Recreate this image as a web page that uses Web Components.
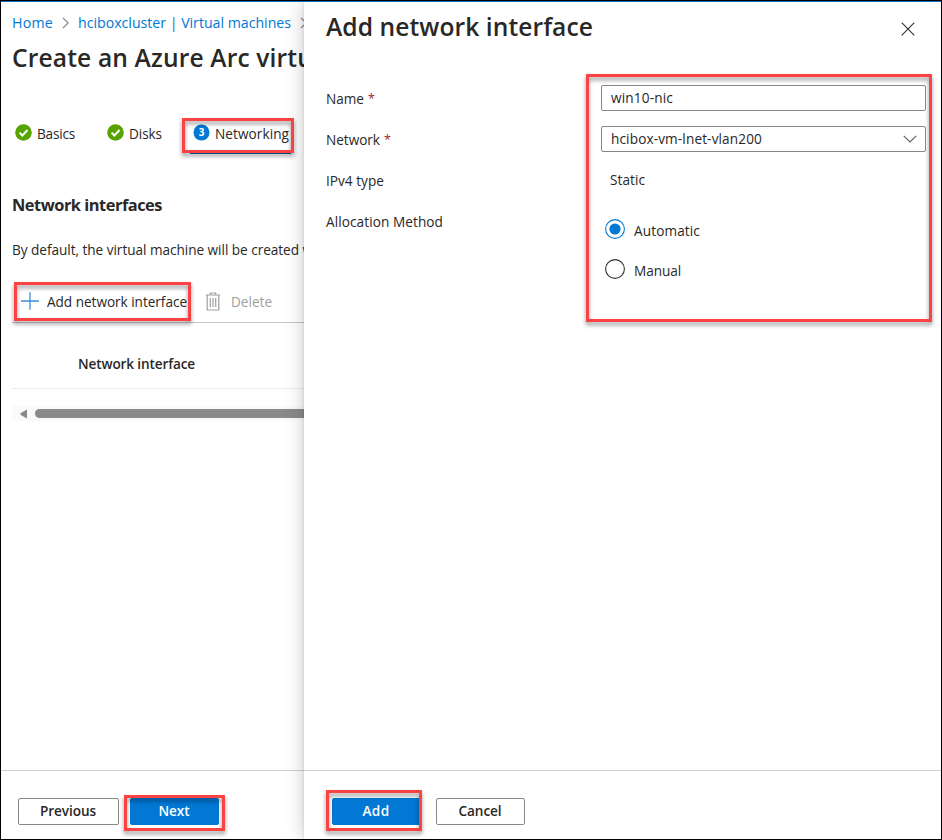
<!DOCTYPE html>
<html lang="en"><head><meta charset="utf-8"><title>Add network interface</title>
<style>
html,body{margin:0;height:100%;overflow:hidden}
body{font-family:"Open Sans","Noto Sans",sans-serif;font-size:13.6px;color:#292827;background:#fff}
</style></head><body>
<portal-frame>
  <wizard-pane slot="wizard"></wizard-pane>
  <nic-panel slot="panel"></nic-panel>
</portal-frame>
<script>
function define(name, html, after) {
  const t = document.createElement('template');
  t.innerHTML = html;
  customElements.define(name, class extends HTMLElement {
    connectedCallback() {
      if (this.shadowRoot) return;
      this.attachShadow({mode: 'open'}).appendChild(t.content.cloneNode(true));
      if (after) after(this, this.shadowRoot);
    }
  });
}

/* Single-line text whose tracking is adjusted to a given width (w). */
define('fit-text', `<style>:host{display:inline-block;white-space:nowrap;line-height:30px;flex:none}</style><slot></slot>`, el => {
  const w = +el.getAttribute('w');
  if (!w) return;
  const n = el.textContent.length;
  const nat = el.getBoundingClientRect().width;
  el.style.letterSpacing = ((w - nat) / n).toFixed(3) + 'px';
});

/* Red callout drawn over its slotted content; --o is the inset. */
define('call-out', `<style>
:host{display:block;position:relative}
i{position:absolute;inset:var(--o,0);border:3px solid #fc4343;filter:drop-shadow(0 3px 2px rgba(0,0,0,.42));pointer-events:none;z-index:2}
</style><slot></slot><i></i>`);

define('crumb-chevron', `<style>:host{display:block;width:8px;height:12px;flex:none}svg{display:block}</style>
<svg width="8" height="12" viewBox="0 0 8 12" fill="none" stroke="#8a8886" stroke-width="1.1"><path d="M1 1l5.2 5L1 11"/></svg>`);

define('step-tab', `<style>
:host{display:flex;align-items:center;height:30px}
svg{display:block;margin:-4px 5px 0 0;flex:none}
text{font:bold 10px "Open Sans",sans-serif;fill:#fff}
</style><svg width="17" height="17" viewBox="0 0 17 17"></svg><slot></slot>`, (el, r) => {
  const n = el.getAttribute('number');
  r.querySelector('svg').innerHTML = n
    ? `<circle cx="8.5" cy="8.5" r="8" fill="#0078d4"/><text x="8.5" y="11.8" text-anchor="middle">${n}</text>`
    : '<circle cx="8.5" cy="8.5" r="8.3" fill="#57a300"/><path d="M4.6 8.6l2.8 2.9 5.1-5.5" fill="none" stroke="#fff" stroke-width="2"/>';
});

define('ui-button', `<style>
:host{display:flex;box-sizing:border-box;height:27px;align-items:center;justify-content:center;border:1px solid #8a8886;border-radius:2px;font-weight:600;background:#fff}
:host([primary]){background:#0078d4;border-color:#0078d4;color:#fff}
::slotted(*){margin:-2px 1px 0 0}
</style><slot></slot>`);

define('text-field', `<style>
:host{display:flex;box-sizing:border-box;width:325px;height:26px;border:1px solid #8a8886;border-radius:2px;align-items:center;padding:0 8px 0 9px;justify-content:space-between}
svg{display:none}:host([dropdown]) svg{display:block}
</style><slot></slot><svg width="14" height="8" viewBox="0 0 14 8" fill="none" stroke="#605e5c" stroke-width="1.1"><path d="M.7 .8L7 7l6.3-6.2"/></svg>`);

define('radio-option', `<style>
:host{display:flex;align-items:center;height:40px}
svg{display:block;margin:-4px 9px 0 0}
</style><svg width="20" height="20" viewBox="0 0 20 20" fill="none"><circle cx="10" cy="10" r="9.4" stroke="#323130" stroke-width="1.1"/></svg><slot></slot>`, (el, r) => {
  if (el.hasAttribute('checked'))
    r.querySelector('svg').innerHTML = '<circle cx="10" cy="10" r="9.4" stroke="#0078d4" stroke-width="1.1"/><circle cx="10" cy="10" r="5.6" fill="#0078d4"/>';
});

define('form-label', `<style>:host{display:flex;align-items:center;height:41px;gap:4px}b{color:#a4262c;font-weight:400;font-size:12.5px;line-height:30px}</style><slot></slot>`, (el, r) => {
  if (el.hasAttribute('required')) {
    const b = document.createElement('b'); b.textContent = '*'; r.appendChild(b);
  }
});

define('wizard-pane', `<style>
:host{display:flex;flex-direction:column;height:100%;overflow:hidden}
main{flex:1;padding:6px 0 0 11px;display:flex;flex-direction:column;min-height:0}
nav{display:flex;align-items:center;color:#0078d4;font-size:14.2px;height:30px}
nav crumb-chevron{margin:0 8px 0 9px}
h1{margin:5px 0 0;font-size:24.6px;font-weight:600;height:30px;line-height:30px}
.steps{display:flex;margin:46px 0 0 3px;height:30px}
.steps call-out{margin-left:31px;--o:-1px -3px -4px -11px}
.line{height:1px;background:#005a9e;margin:4px 0 0 -3px;width:101px}
h2{margin:41px 0 0;font-size:16.4px;font-weight:700;height:30px;line-height:30px}
p{margin:15px 0 0;height:30px;white-space:nowrap}
.bar{display:flex;align-items:flex-start;height:35px;margin-top:22px;border-bottom:1px solid #c8c6c4}
.bar call-out{--o:-5px -4px -4px -6px;margin-left:8px}
.cmd{display:flex;align-items:center;height:30px}
.cmd svg{display:block;margin:-2px 7px 0 0}
.del{color:#a19f9d;margin-left:18px}.del svg{margin-right:10px}
.head{height:65px;border-bottom:1px solid #edebe9;display:flex;align-items:center;padding:0 0 0 66px;font-weight:600;box-sizing:border-box;margin-top:1px;padding-top:15px}
.scroll{height:15px;background:#fafafa;margin-top:17px;display:flex;align-items:center;padding-left:8px}
.scroll i{flex:1;height:9px;background:#8a8a8a;border-radius:5px 0 0 5px;margin-left:8px}
.scroll svg{display:block}
footer{height:69px;border-top:1px solid #d0d0d0;display:flex;align-items:flex-start;padding:27px 0 0 17px;box-sizing:border-box;gap:11px}
footer>ui-button{width:101px}footer call-out{width:89px;--o:-3px -6px -6px -6px}
</style>
<main>
<nav><fit-text w="41">Home</fit-text><crumb-chevron></crumb-chevron><fit-text w="213">hciboxcluster | Virtual machines</fit-text><crumb-chevron></crumb-chevron></nav>
<h1><fit-text w="301">Create an Azure Arc virtu</fit-text></h1>
<div class="steps"><step-tab><fit-text w="38">Basics</fit-text></step-tab><step-tab style="margin-left:32px"><fit-text w="33">Disks</fit-text></step-tab>
<call-out><step-tab number="3"><fit-text w="74">Networking</fit-text></step-tab><div class="line"></div></call-out></div>
<h2><fit-text w="150">Network interfaces</fit-text></h2>
<p><fit-text w="287">By default, the virtual machine will be created</fit-text><fit-text>&nbsp;w</fit-text></p>
<div class="bar"><call-out><div class="cmd"><svg width="20" height="18" viewBox="0 0 20 18" fill="none" stroke="#3b8ede" stroke-width="1.3"><path d="M1 9h18M10 .3v17.4"/></svg><fit-text w="140">Add network interface</fit-text></div></call-out>
<div class="cmd del"><svg width="16" height="19" viewBox="0 0 16 19" fill="none" stroke="#a19f9d" stroke-width="1.2"><path d="M.8 3h14.4M5.3 3V1h5.4v2M2.2 3v15h11.6V3M5.3 6v9M8 6v9M10.7 6v9"/></svg><fit-text w="41">Delete</fit-text></div></div>
<div class="head"><fit-text w="117">Network interface</fit-text></div>
<div class="scroll"><svg width="7" height="10" viewBox="0 0 7 10"><path d="M7 .5v9L.8 6Q-.2 5 .8 4z" fill="#8a8a8a"/></svg><i></i></div>
</main>
<footer><ui-button><fit-text w="56">Previous</fit-text></ui-button><call-out><ui-button primary><fit-text w="31">Next</fit-text></ui-button></call-out></footer>`);

define('nic-panel', `<style>
:host{display:flex;flex-direction:column;height:100%;background:#fff;position:relative;box-shadow:0 0 18px rgba(0,0,0,.22),0 0 3px rgba(0,0,0,.12)}
header{display:flex;justify-content:space-between;align-items:center;padding:10px 26px 0 22px;height:30px}
h1{margin:0;font-size:24.6px;font-weight:600;line-height:30px;height:30px}
header svg{display:block;margin-top:3px}
main{flex:1;display:grid;grid-template-columns:275px 325px;padding:36px 0 0 22px;align-content:start}
call-out{--o:-6px -6px 0 -15px;height:242px}
main call-out{margin-top:2px}
.fields{padding-top:5px;height:237px;box-sizing:border-box}
text-field{margin-bottom:15px}
.static{height:26px;display:flex;align-items:center;padding-left:9px}
radio-option{margin-left:4px}
footer{height:69px;border-top:1px solid #d0d0d0;display:flex;align-items:flex-start;padding:27px 0 0 27px;box-sizing:border-box;gap:14px}
footer call-out{width:91px;height:27px;--o:-8px 0 -6px -5px}
footer call-out ui-button{width:89px;margin-left:1px}
footer>ui-button{width:89px}
</style>
<header><h1><fit-text w="267">Add network interface</fit-text></h1><svg width="14" height="14" viewBox="0 0 14 14" fill="none" stroke="#323130" stroke-width="1.1"><path d="M.7 .7l12.6 12.6M13.3 .7L.7 13.3"/></svg></header>
<main><div><form-label required><fit-text w="38">Name</fit-text></form-label><form-label required><fit-text w="54">Network</fit-text></form-label><form-label><fit-text w="58">IPv4 type</fit-text></form-label><form-label><fit-text w="117">Allocation Method</fit-text></form-label></div>
<call-out><div class="fields"><text-field><fit-text w="62">win10-nic</fit-text></text-field><text-field dropdown><fit-text w="151">hcibox-vm-lnet-vlan200</fit-text></text-field><div class="static"><fit-text w="35">Static</fit-text></div>
<div style="padding-top:18px"><radio-option checked><fit-text w="66">Automatic</fit-text></radio-option><radio-option><fit-text w="47">Manual</fit-text></radio-option></div></div></call-out></main>
<footer><call-out><ui-button primary><fit-text w="27">Add</fit-text></ui-button></call-out><ui-button><fit-text w="43">Cancel</fit-text></ui-button></footer>`);

define('portal-frame', `<style>
:host{display:grid;box-sizing:border-box;width:942px;height:840px;border:1px solid #000;grid-template:1px 837px/303px 637px;overflow:hidden;background:#fff}
div{grid-column:1/3;background:#0f6cbd;position:relative;z-index:3}
::slotted(*){min-width:0}
</style><div></div><slot name="wizard"></slot><slot name="panel"></slot>`);
</script>
</body></html>
